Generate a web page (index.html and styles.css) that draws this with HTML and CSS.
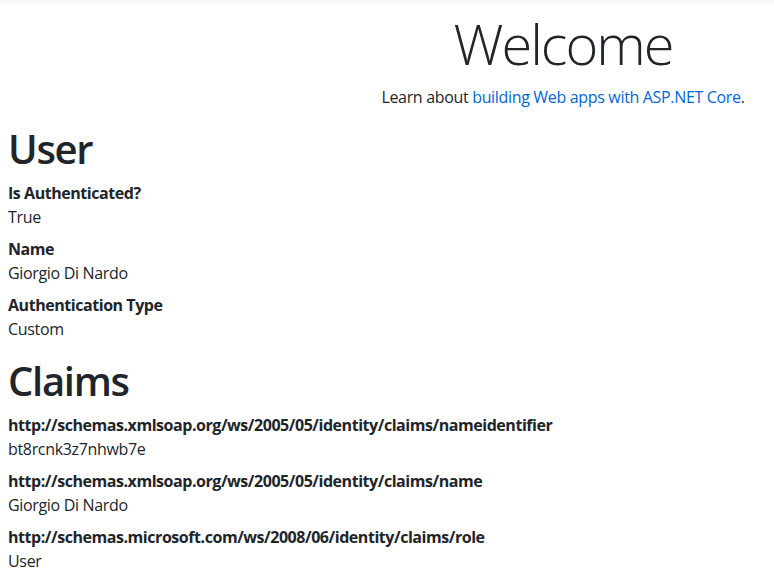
FILE: index.html
```html
<!DOCTYPE html>
<html lang="en">
<head>
    <meta charset="utf-8">
    <meta name="viewport" content="width=device-width, initial-scale=1.0">
    <title>Home Page</title>
    <link rel="stylesheet" href="styles.css">
</head>
<body>
    <div class="container">
        <main role="main">
            <div class="text-center">
                <h1 class="display-4">Welcome</h1>
                <p>Learn about <a href="#">building Web apps with ASP.NET Core</a>.</p>
            </div>

            <h1>User</h1>
            <dl>
                <dt>Is Authenticated?</dt>
                <dd>True</dd>
                <dt>Name</dt>
                <dd>Giorgio Di Nardo</dd>
                <dt>Authentication Type</dt>
                <dd>Custom</dd>
            </dl>

            <h1>Claims</h1>
            <dl>
                <dt>http://schemas.xmlsoap.org/ws/2005/05/identity/claims/nameidentifier</dt>
                <dd>bt8rcnk3z7nhwb7e</dd>
                <dt>http://schemas.xmlsoap.org/ws/2005/05/identity/claims/name</dt>
                <dd>Giorgio Di Nardo</dd>
                <dt>http://schemas.microsoft.com/ws/2008/06/identity/claims/role</dt>
                <dd>User</dd>
            </dl>
        </main>
    </div>
</body>
</html>
```

FILE: styles.css
```css
html {
    font-size: 16px;
}

body {
    margin: 0;
    font-family: "Open Sans", "Noto Sans", sans-serif;
    font-size: 1rem;
    line-height: 1.5;
    letter-spacing: -0.33px;
    color: #212529;
    background: #fff linear-gradient(to bottom, #f6f6f6, #fff 7px) no-repeat;
}

.container {
    padding: 10px 8px 0 8px;
}

a {
    color: #0366d6;
    text-decoration: none;
}

p {
    margin: 0 0 1rem 0;
}

h1 {
    margin: 0 0 .5rem 0;
    font-size: 2.5rem;
    font-weight: 550;
    line-height: 1.2;
    letter-spacing: -1.3px;
}

.text-center {
    text-align: center;
    padding-left: 352px;
}

.display-4 {
    font-size: 3.5rem;
    font-weight: 300;
    letter-spacing: -2px;
}

dl {
    margin: 0 0 1rem 0;
}

dt {
    font-weight: 700;
    letter-spacing: -0.45px;
}

dd {
    margin: 0 0 .5rem 0;
}
```
